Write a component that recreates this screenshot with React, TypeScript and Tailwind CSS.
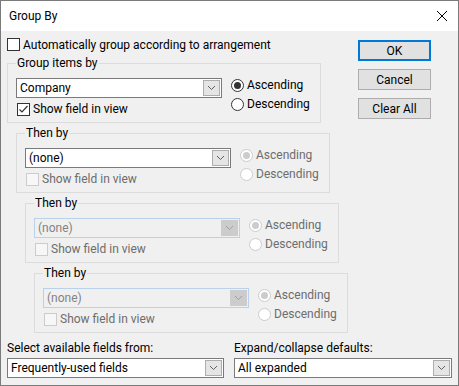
import React from "react";

const font = { fontFamily: 'Roboto, "Noto Sans", sans-serif' };

function Chevron({ color = "#606060" }: { color?: string }) {
  return (
    <svg width="9" height="6" viewBox="0 0 9 6">
      <path d="M1 1 L4.5 4.5 L8 1" fill="none" stroke={color} strokeWidth="1" />
    </svg>
  );
}

function Dropdown({
  value,
  width,
  disabled = false,
}: {
  value: string;
  width: string;
  disabled?: boolean;
}) {
  return (
    <div
      className={`${width} h-[20px] flex items-center justify-between border ${
        disabled ? "border-[#b9d1ea] bg-[#f0f0f0] text-[#838383]" : "border-[#7a7a7a] bg-white text-black"
      }`}
    >
      <span className="pl-[3px] leading-none">{value}</span>
      <div
        className={`w-[17px] h-[16px] mr-[1px] flex items-center justify-center border ${
          disabled ? "border-[#cccccc] bg-[#cccccc]" : "border-[#adadad] bg-[#e5e5e5]"
        }`}
      >
        <Chevron color={disabled ? "#a0a0a0" : "#606060"} />
      </div>
    </div>
  );
}

function Checkbox({ checked = false, disabled = false }: { checked?: boolean; disabled?: boolean }) {
  return (
    <div
      className={`w-[13px] h-[13px] shrink-0 border flex items-center justify-center ${
        disabled ? "border-[#cccccc] bg-[#f7f7f7]" : "border-[#333333] bg-white"
      }`}
    >
      {checked && (
        <svg width="11" height="11" viewBox="0 0 11 11">
          <path d="M1.5 5.5 L4 8 L9.5 2" fill="none" stroke="#333333" strokeWidth="1.2" />
        </svg>
      )}
    </div>
  );
}

function Radio({ checked = false, disabled = false }: { checked?: boolean; disabled?: boolean }) {
  return (
    <div
      className={`w-[13px] h-[13px] shrink-0 rounded-full border flex items-center justify-center ${
        disabled ? "border-[#cccccc] bg-white" : "border-[#333333] bg-white"
      }`}
    >
      {checked && (
        <div className={`w-[7px] h-[7px] rounded-full ${disabled ? "bg-[#cccccc]" : "bg-[#333333]"}`} />
      )}
    </div>
  );
}

function GroupBox({
  label,
  value,
  enabled,
  fieldEnabled,
  checked,
  indent,
}: {
  label: string;
  value: string;
  enabled: boolean;
  fieldEnabled: boolean;
  checked: boolean;
  indent: string;
}) {
  const muted = "text-[#6d6d6d]";
  return (
    <div className={`${indent} relative w-[314px] h-[60px] border border-[#dcdcdc]`}>
      <span className="absolute left-[8px] top-[-8px] px-[1px] bg-[#f0f0f0] leading-[14px] text-black">
        {label}
      </span>
      <div className="flex pt-[14px] pl-[8px]">
        <div className="flex flex-col">
          <Dropdown value={value} width="w-[206px]" disabled={!fieldEnabled} />
          <div className="flex items-center gap-[3px] pl-[1px] mt-[4px]">
            <Checkbox checked={checked} disabled={!enabled} />
            <span className={`leading-[14px] ${enabled ? "text-black" : muted}`}>Show field in view</span>
          </div>
        </div>
        <div className="flex flex-col ml-[9px] mt-0 gap-[5px]">
          <div className="flex items-center gap-[3px]">
            <Radio checked disabled={!enabled} />
            <span className={`leading-[14px] ${enabled ? "text-black" : muted}`}>Ascending</span>
          </div>
          <div className="flex items-center gap-[3px]">
            <Radio disabled={!enabled} />
            <span className={`leading-[14px] ${enabled ? "text-black" : muted}`}>Descending</span>
          </div>
        </div>
      </div>
    </div>
  );
}

function Button({ label, primary = false }: { label: string; primary?: boolean }) {
  return (
    <div
      className={`w-[73px] h-[21px] flex items-center justify-center bg-[#e1e1e1] text-black ${
        primary ? "border-2 border-[#0078d7]" : "border border-[#adadad]"
      }`}
    >
      {label}
    </div>
  );
}

export default function App() {
  return (
    <div
      style={font}
      className="w-[459px] h-[386px] border border-[#7a7a7a] bg-[#f0f0f0] text-[12px] text-black flex flex-col overflow-hidden"
    >
      <div className="h-[30px] bg-white flex items-center justify-between pl-[8px] pr-[10px] shrink-0">
        <span className="text-[12px]">Group By</span>
        <svg width="12" height="12" viewBox="0 0 12 12">
          <path d="M1 1 L11 11 M11 1 L1 11" stroke="#000" strokeWidth="1" />
        </svg>
      </div>
      <div className="flex pl-[6px]">
        <div className="flex flex-col w-[350px]">
          <div className="flex items-center gap-[3px] mt-[7px] h-[13px]">
            <Checkbox />
            <span className="leading-[14px]">Automatically group according to arrangement</span>
          </div>
          <div className="mt-[12px] flex flex-col gap-[10px]">
            <GroupBox label="Group items by" value="Company" enabled fieldEnabled checked indent="ml-0" />
            <GroupBox label="Then by" value="(none)" enabled={false} fieldEnabled checked={false} indent="ml-[9px]" />
            <GroupBox label="Then by" value="(none)" enabled={false} fieldEnabled={false} checked={false} indent="ml-[18px]" />
            <GroupBox label="Then by" value="(none)" enabled={false} fieldEnabled={false} checked={false} indent="ml-[27px]" />
          </div>
        </div>
        <div className="flex flex-col ml-[1px] mt-[9px] gap-[8px]">
          <Button label="OK" primary />
          <Button label="Cancel" />
          <Button label="Clear All" />
        </div>
      </div>
      <div className="flex pl-[6px] mt-[8px] gap-[10px]">
        <div className="flex flex-col gap-[3px]">
          <span className="leading-[14px]">Select available fields from:</span>
          <Dropdown value="Frequently-used fields" width="w-[217px]" />
        </div>
        <div className="flex flex-col gap-[3px]">
          <span className="leading-[14px]">Expand/collapse defaults:</span>
          <Dropdown value="All expanded" width="w-[218px]" />
        </div>
      </div>
    </div>
  );
}
